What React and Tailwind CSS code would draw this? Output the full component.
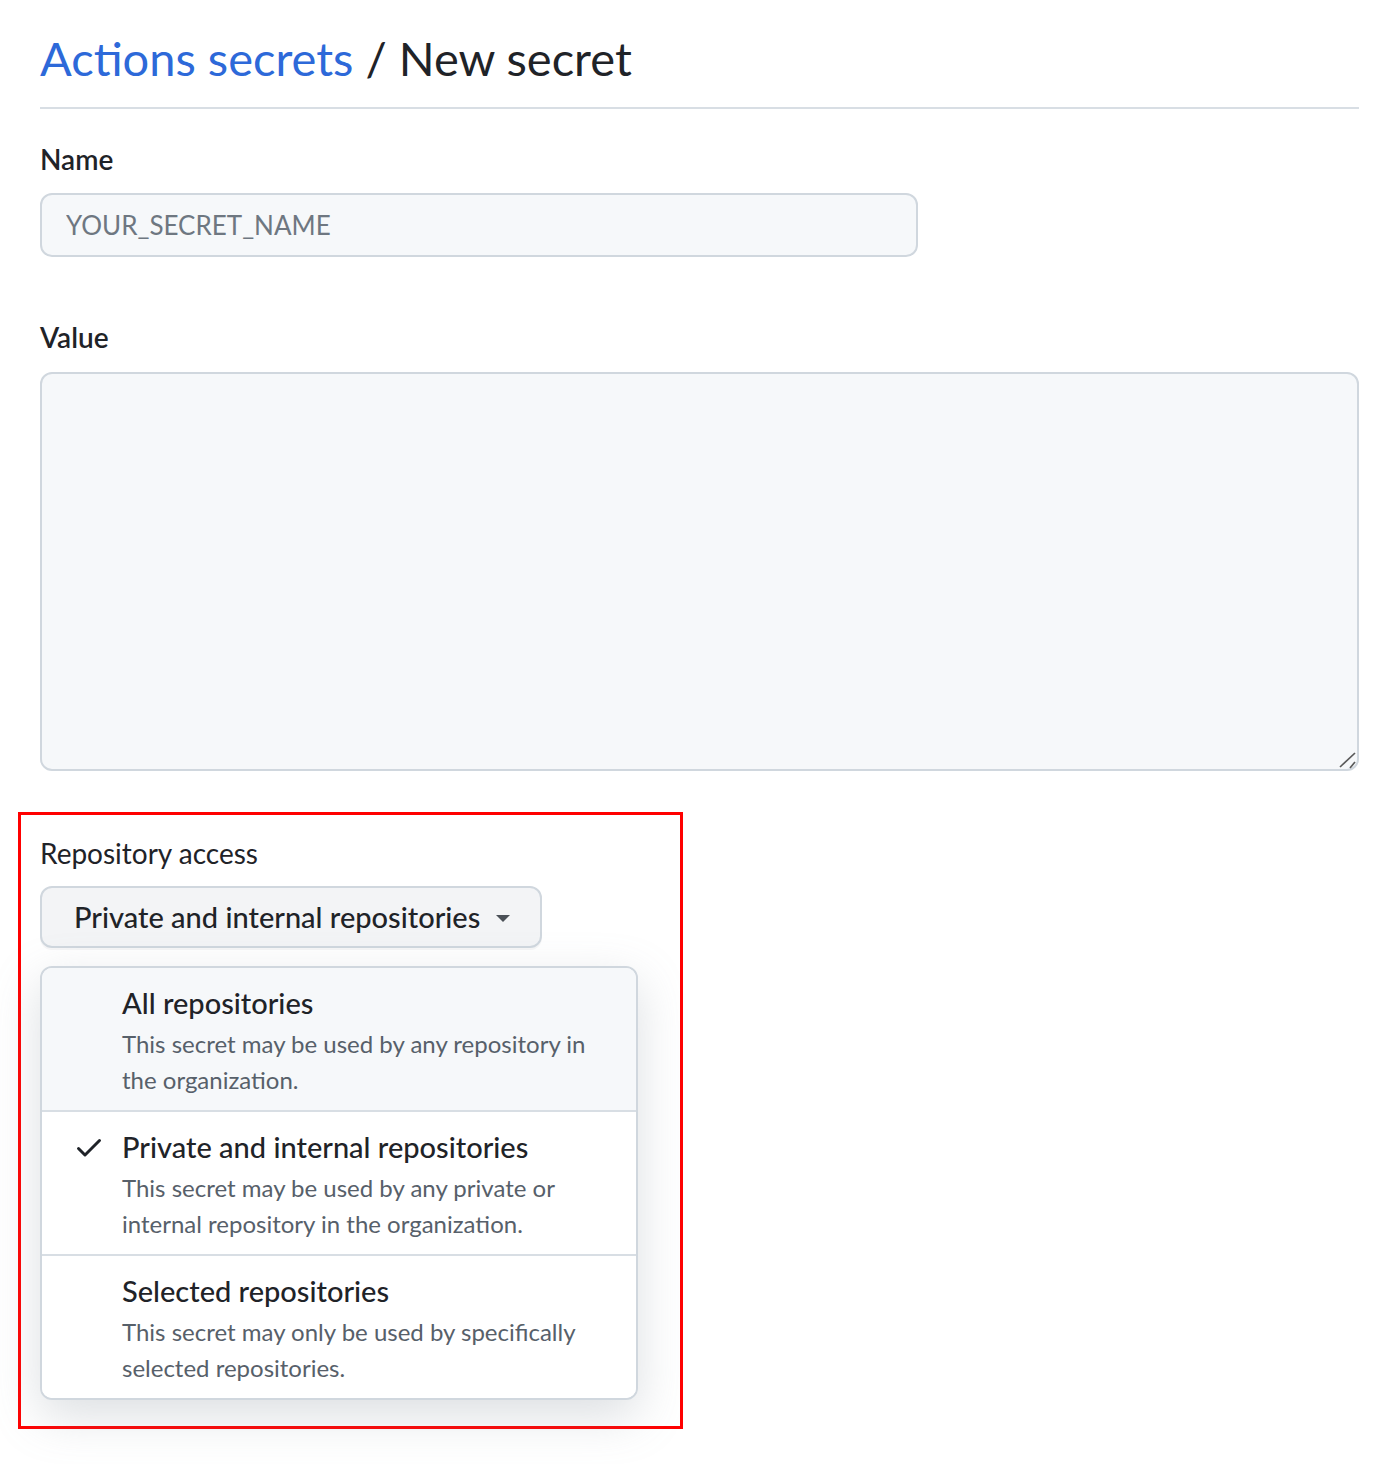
function CheckIcon() {
  return (
    <svg width="32" height="32" viewBox="0 0 16 16" fill="#1f2328" aria-hidden="true">
      <path d="M13.78 4.22a.75.75 0 0 1 0 1.06l-7.25 7.25a.75.75 0 0 1-1.06 0L2.22 9.28a.751.751 0 0 1 .018-1.042.751.751 0 0 1 1.042-.018L6 10.94l6.72-6.72a.75.75 0 0 1 1.06 0Z" />
    </svg>
  );
}

function MenuItem({ title, desc, checked, hover, last }) {
  return (
    <div
      className={
        "flex pl-[31px] pr-[24px] pt-[15px] pb-[12px] " +
        (hover ? "bg-[#f6f8fa] " : "bg-white ") +
        (last ? "" : "border-b-2 border-[#d8dee4]")
      }
    >
      <div className="w-[32px] h-[40px] flex items-center justify-center shrink-0">
        {checked ? <CheckIcon /> : null}
      </div>
      <div className="ml-[17px] w-[490px]">
        <div className="text-[29px] leading-[40px] font-medium text-[#1f2328]">{title}</div>
        <div className="mt-[3px] text-[24px] leading-[36px] text-[#57606a]">{desc}</div>
      </div>
    </div>
  );
}

export default function App() {
  return (
    <div className="bg-white min-h-[1464px] pl-[40px] pr-[18px] font-['Lato','Noto_Sans',sans-serif] text-[#1f2328]">
      <h1 className="pt-[30px] pb-[21px] border-b-2 border-[#d8dee4] text-[47px] leading-[56px] font-normal">
        <span className="text-[#2d69d9]">Actions secrets</span> / New secret
      </h1>

      <div className="mt-[30px]">
        <div className="text-[28px] leading-[40px] font-semibold">Name</div>
        <input
          readOnly
          placeholder="YOUR_SECRET_NAME"
          className="mt-[14px] block h-[64px] w-[878px] rounded-[12px] border-2 border-[#d0d7de] bg-[#f6f8fa] px-[24px] text-[26px] text-[#1f2328] placeholder:text-[#6e7781] outline-none"
        />
      </div>

      <div className="mt-[60px]">
        <div className="text-[28px] leading-[40px] font-semibold">Value</div>
        <div className="relative mt-[15px]">
          <textarea
            readOnly
            className="block h-[399px] w-full rounded-[12px] border-2 border-[#d0d7de] bg-[#f6f8fa] px-[24px] py-[12px] text-[28px] outline-none resize-none"
          />
          <svg
            className="absolute right-[2px] bottom-[2px]"
            width="20"
            height="20"
            viewBox="0 0 20 20"
            aria-hidden="true"
          >
            <line x1="3" y1="18" x2="18" y2="4" stroke="#5a5a5a" strokeWidth="1.7" />
            <line x1="13" y1="19" x2="18" y2="13" stroke="#5a5a5a" strokeWidth="1.7" />
          </svg>
        </div>
      </div>

      <div className="mt-[41px] -ml-[22px] w-[665px] border-[3px] border-[#ff0000] pt-[18px] pl-[19px] pb-[26px]">
        <div className="text-[28px] leading-[40px] font-normal">Repository access</div>
        <button className="mt-[13px] flex items-center h-[62px] w-[502px] rounded-[12px] border-2 border-[#d0d7de] bg-[#f3f4f6] pl-[32px] shadow-[0_2px_0_rgba(31,35,40,0.04)]">
          <span className="text-[29px] leading-[40px] font-medium text-[#1f2328]">Private and internal repositories</span>
          <span className="ml-[16px] mt-[3px] w-0 h-0 border-l-[7px] border-r-[7px] border-t-[7px] border-l-transparent border-r-transparent border-t-[#4b5057]" />
        </button>
        <div className="mt-[18px] w-[598px] rounded-[12px] border-2 border-[#d0d7de] overflow-hidden bg-white shadow-[0_16px_48px_rgba(140,149,159,0.3)]">
          <MenuItem
            hover
            title="All repositories"
            desc="This secret may be used by any repository in the organization."
          />
          <MenuItem
            checked
            title="Private and internal repositories"
            desc="This secret may be used by any private or internal repository in the organization."
          />
          <MenuItem
            last
            title="Selected repositories"
            desc="This secret may only be used by specifically selected repositories."
          />
        </div>
      </div>
    </div>
  );
}
